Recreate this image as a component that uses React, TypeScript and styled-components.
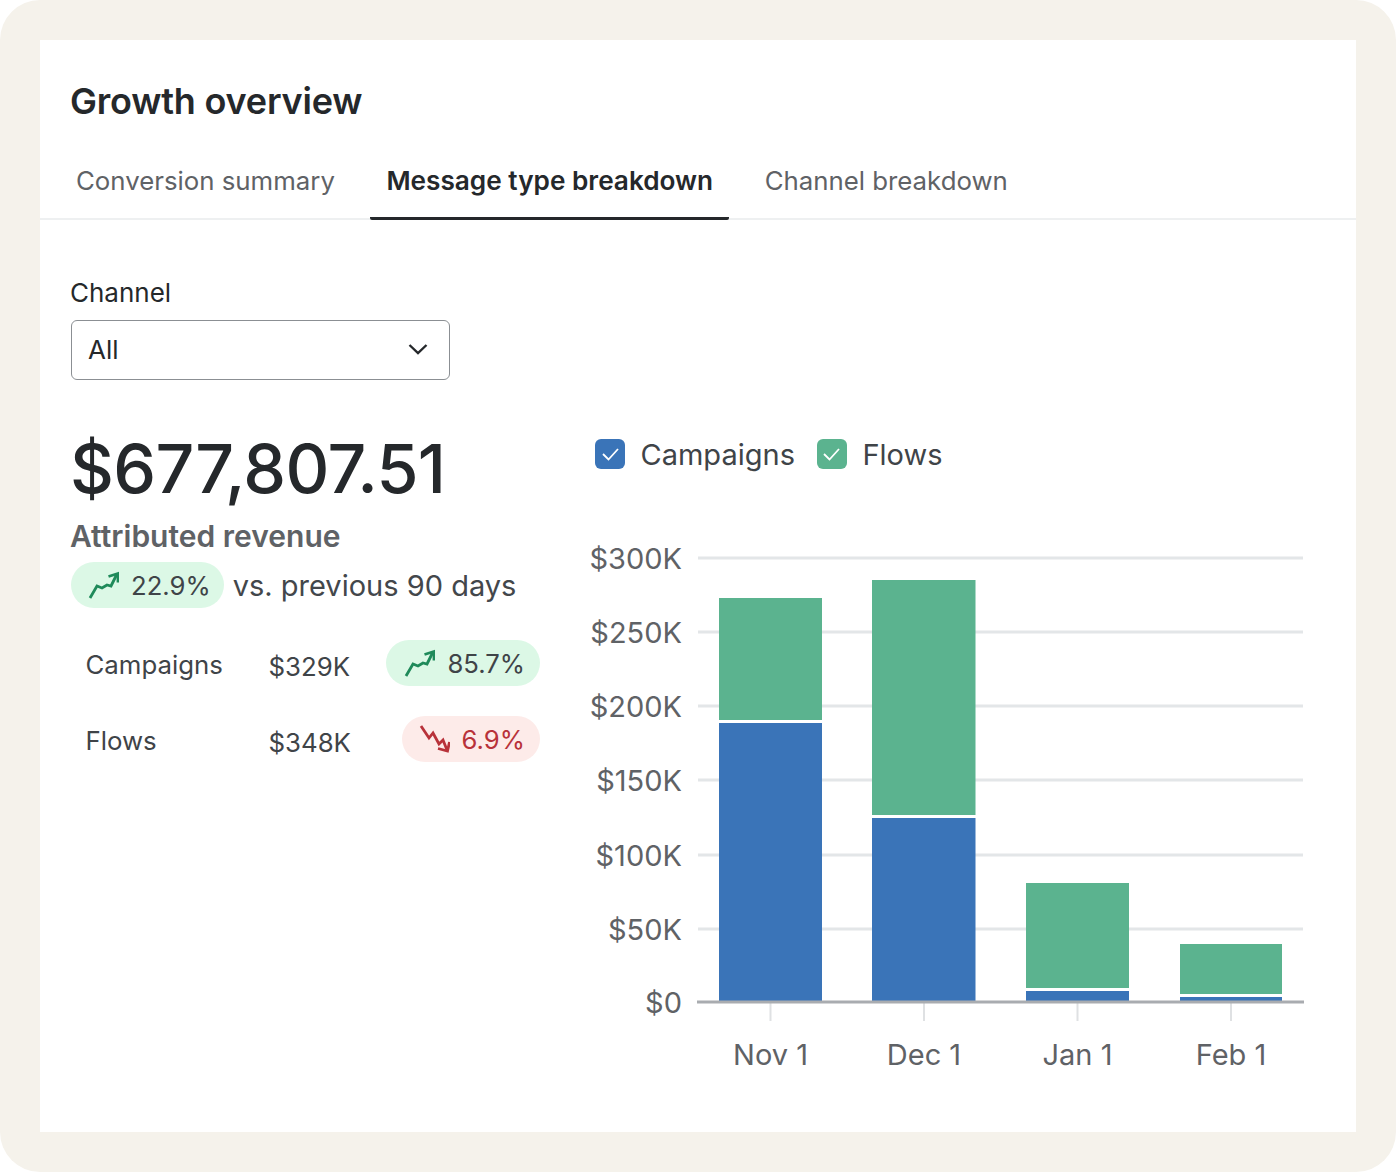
import React from 'react';
import styled, { createGlobalStyle } from 'styled-components';

const Global = createGlobalStyle`
  html, body { margin: 0; padding: 0; background: #fff; }
  * { box-sizing: border-box; }
  body { font-family: Inter, "Liberation Sans", sans-serif; color: #25282b; }
`;

const Frame = styled.div`
  width: 1396px;
  height: 1172px;
  background: #f5f2eb;
  border-radius: 40px;
  padding: 40px;
`;
const Card = styled.div`
  width: 1316px;
  height: 1092px;
  background: #fff;
`;
const Title = styled.h1`
  margin: 0;
  padding: 39px 0 0 30px;
  font-size: 36px;
  line-height: 44px;
  font-weight: 600;
  color: #25282b;
  letter-spacing: -0.2px;
`;
const Tabs = styled.div`
  display: flex;
  gap: 19.5px;
  margin-top: 37px;
  padding-left: 20px;
  height: 60px;
  border-bottom: 2px solid #eef0f1;
`;
const Tab = styled.div<{ $active?: boolean }>`
  padding: 0 16px;
  height: 60px;
  line-height: 42px;
  font-size: ${p => (p.$active ? '26.2px' : '25.8px')};
  font-weight: ${p => (p.$active ? 600 : 400)};
  color: ${p => (p.$active ? '#25282b' : '#5f6266')};
  border-bottom: ${p => (p.$active ? '3px solid #25282b' : '0')};
  border-radius: 2px;
  white-space: nowrap;
`;
const Body = styled.div`
  padding: 56px 0 0 31px;
`;
const FieldLabel = styled.div`
  margin-left: -1px;
  font-size: 26px;
  line-height: 34px;
  color: #25282b;
`;
const Select = styled.div`
  margin-top: 10px;
  width: 379px;
  height: 60px;
  border: 1.5px solid #8b8f93;
  border-radius: 6px;
  padding: 0 20px 2px 16px;
  display: flex;
  align-items: center;
  justify-content: space-between;
  font-size: 26px;
  color: #25282b;
`;
const Columns = styled.div`
  display: flex;
  margin-top: 53px;
`;
const Left = styled.div`
  width: 469px;
  flex: none;
`;
const Big = styled.div`
  margin-left: -1px;
  font-size: 68px;
  line-height: 70px;
  font-weight: 500;
  color: #25282b;
  letter-spacing: -0.6px;
`;
const Sub = styled.div`
  margin: 15px 0 0 -1px;
  font-size: 30px;
  line-height: 36px;
  font-weight: 600;
  color: #5f6266;
`;
const Compare = styled.div`
  margin-top: 8px;
  display: flex;
  align-items: center;
  gap: 9px;
  font-size: 29px;
  color: #43474b;
`;
const Pill = styled.span<{ $down?: boolean }>`
  display: inline-flex;
  align-items: center;
  gap: 12px;
  height: 46px;
  padding: 0 15px 0 17px;
  border-radius: 23px;
  font-size: 25.7px;
  background: ${p => (p.$down ? '#fdebe9' : '#dcf8e6')};
  color: ${p => (p.$down ? '#b8323a' : '#3f4448')};
`;
const HeadlinePill = styled(Pill)`
  padding: 0 13px 0 16px;
`;
const Breakdown = styled.div`
  margin-top: 32px;
  display: flex;
  flex-direction: column;
  gap: 30px;
`;
const Row = styled.div`
  display: grid;
  grid-template-columns: 1fr auto;
  align-items: center;
  height: 46px;
`;
const RowMain = styled.div`
  display: grid;
  grid-template-columns: 183px 96px;
  padding: 4px 0 0 14.5px;
  font-size: 25.8px;
  color: #3f4448;
`;
const Amount = styled.span`
  padding-top: 2px;
  text-align: right;
  width: 79.5px;
`;
const Right = styled.div`
  flex: 1;
  padding-left: 55px;
`;
const Legend = styled.div`
  display: flex;
  align-items: center;
  gap: 22px;
  height: 34px;
  margin-top: 4px;
`;
const LegendItem = styled.div`
  display: flex;
  align-items: center;
  gap: 15.5px;
  font-size: 29px;
  color: #3f4448;
`;
const Check = styled.span<{ $color: string }>`
  width: 30px;
  height: 30px;
  border-radius: 6px;
  background: ${p => p.$color};
  display: inline-flex;
  align-items: center;
  justify-content: center;
`;
const ChartSvg = styled.svg`
  display: block;
  margin: 59px 0 0 -10px;
  overflow: visible;
`;
const ChartLabel = styled.text`
  font-family: Inter, "Liberation Sans", sans-serif;
  font-size: 29px;
  fill: #5f6266;
`;

const Up = () => (
  <svg width="32" height="30" viewBox="0 0 32 30" fill="none" stroke="#1f8a5a" strokeWidth="2.8">
    <path d="M3 28 L10 16 L15 18 L20 15 L24 16 L30 4" />
    <path d="M21.5 6.5 L31 3.5 L31 12.5" />
  </svg>
);
const Down = () => (
  <svg width="31" height="30" viewBox="0 0 31 30" fill="none" stroke="#b8323a" strokeWidth="2.8">
    <path d="M2 2 L10 14 L14 9 L20 20 L24 16 L28 26" />
    <path d="M19 24.5 L28.5 27 L30.5 18" />
  </svg>
);
const Tick = () => (
  <svg width="21" height="17" viewBox="0 0 21 17" fill="none" stroke="#fff" strokeWidth="1.8">
    <path d="M3 8 L8.5 13.5 L18 3" />
  </svg>
);
const Chevron = () => (
  <svg width="22" height="14" viewBox="0 0 22 14" fill="none" stroke="#25282b" strokeWidth="2.4">
    <path d="M2.5 3 L11 11 L19.5 3" />
  </svg>
);

// chart geometry is expressed in page pixels minus the svg origin
const OX = 585;
const OY = 530;
const gridY = [558, 632, 706, 780, 855, 929];
const yLabels = ['$300K', '$250K', '$200K', '$150K', '$100K', '$50K'];
const bars = [
  { x: 719, w: 103, top: 598, split: 720, blue: 723, label: 'Nov 1', c: 770.5 },
  { x: 872, w: 103.5, top: 580, split: 815, blue: 818, label: 'Dec 1', c: 924 },
  { x: 1026, w: 103, top: 883, split: 988, blue: 991, label: 'Jan 1', c: 1077.5 },
  { x: 1180, w: 102, top: 944, split: 994, blue: 997, label: 'Feb 1', c: 1231 },
];

const Chart = () => (
  <ChartSvg width="725" height="550" viewBox={`${OX} ${OY} 725 550`}>
    {gridY.map((y, i) => (
      <g key={y}>
        <line x1={698} x2={1303} y1={y} y2={y} stroke="#e3e6e8" strokeWidth="3" />
        <ChartLabel x={682} y={y + 11} textAnchor="end">{yLabels[i]}</ChartLabel>
      </g>
    ))}
    <ChartLabel x={682} y={1013} textAnchor="end">$0</ChartLabel>
    {bars.map(b => (
      <g key={b.label}>
        <rect x={b.x} y={b.top} width={b.w} height={b.split - b.top} fill="#5bb38f" />
        <rect x={b.x} y={b.blue} width={b.w} height={1002 - b.blue} fill="#3a74b8" />
        <line x1={b.c} x2={b.c} y1={1002} y2={1021} stroke="#dfe1e3" strokeWidth="2" />
        <ChartLabel x={b.c} y={1065} textAnchor="middle">{b.label}</ChartLabel>
      </g>
    ))}
    <line x1={697} x2={1304} y1={1002} y2={1002} stroke="#a9acb0" strokeWidth="3" />
  </ChartSvg>
);

export default function App() {
  return (
    <>
      <Global />
      <Frame>
        <Card>
          <Title>Growth overview</Title>
          <Tabs>
            <Tab>Conversion summary</Tab>
            <Tab $active>Message type breakdown</Tab>
            <Tab>Channel breakdown</Tab>
          </Tabs>
          <Body>
            <FieldLabel>Channel</FieldLabel>
            <Select>
              <span>All</span>
              <Chevron />
            </Select>
            <Columns>
              <Left>
                <Big>$677,807.51</Big>
                <Sub>Attributed revenue</Sub>
                <Compare>
                  <HeadlinePill><Up />22.9%</HeadlinePill>
                  vs. previous 90 days
                </Compare>
                <Breakdown>
                  <Row>
                    <RowMain>
                      <span>Campaigns</span>
                      <Amount>$329K</Amount>
                    </RowMain>
                    <Pill><Up />85.7%</Pill>
                  </Row>
                  <Row>
                    <RowMain>
                      <span>Flows</span>
                      <Amount>$348K</Amount>
                    </RowMain>
                    <Pill $down><Down />6.9%</Pill>
                  </Row>
                </Breakdown>
              </Left>
              <Right>
                <Legend>
                  <LegendItem>
                    <Check $color="#3a74b8"><Tick /></Check>
                    Campaigns
                  </LegendItem>
                  <LegendItem>
                    <Check $color="#5bb38f"><Tick /></Check>
                    Flows
                  </LegendItem>
                </Legend>
                <Chart />
              </Right>
            </Columns>
          </Body>
        </Card>
      </Frame>
    </>
  );
}
